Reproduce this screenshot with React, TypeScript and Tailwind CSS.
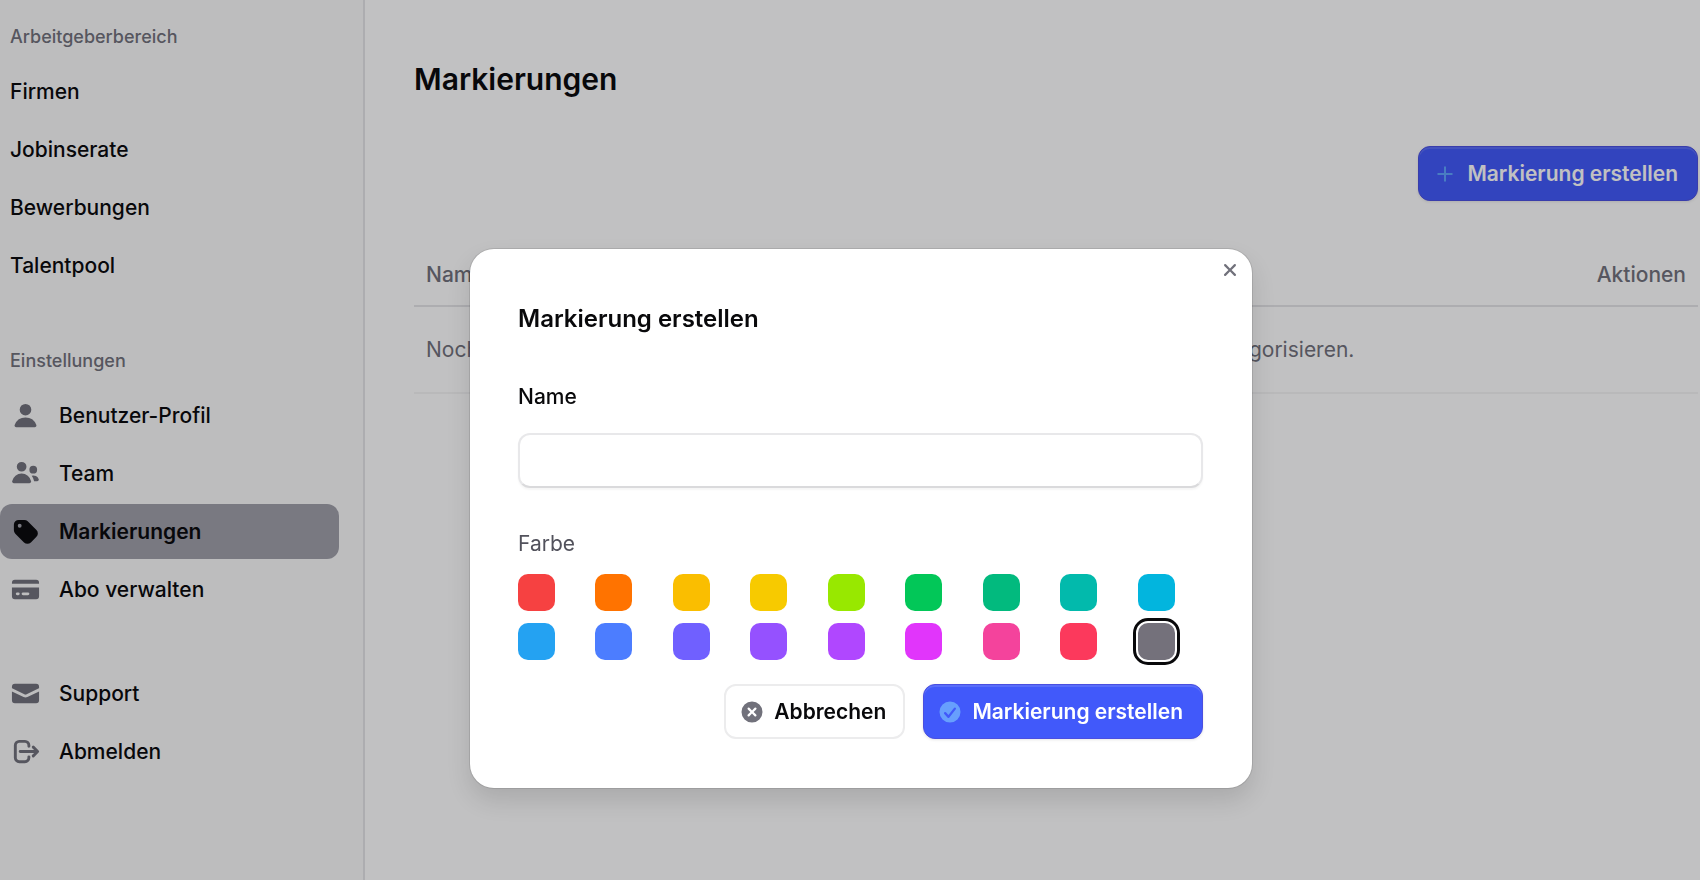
import React, { useState } from 'react';
import clsx from 'clsx';

const icons = {
  user: [
    'M8 8a3 3 0 1 0 0-6 3 3 0 0 0 0 6ZM12.735 14c.618 0 1.093-.561.872-1.139a6.002 6.002 0 0 0-11.215 0c-.22.578.254 1.139.872 1.139h9.47Z',
  ],
  users: [
    'M8.5 4.5a2.5 2.5 0 1 1-5 0 2.5 2.5 0 0 1 5 0ZM10.9 12.006c.11.542-.348.994-.9.994H2c-.553 0-1.01-.452-.902-.994a5.002 5.002 0 0 1 9.803 0ZM14.002 12h-1.59a2.556 2.556 0 0 0-.04-.29 6.476 6.476 0 0 0-1.167-2.603 3.002 3.002 0 0 1 3.633 1.911c.18.522-.283.982-.836.982ZM12 8a2 2 0 1 0 0-4 2 2 0 0 0 0 4Z',
  ],
  tag: [
    'M4.5 2A2.5 2.5 0 0 0 2 4.5v2.879a2.5 2.5 0 0 0 .732 1.767l4.5 4.5a2.5 2.5 0 0 0 3.536 0l2.878-2.878a2.5 2.5 0 0 0 0-3.536l-4.5-4.5A2.5 2.5 0 0 0 7.38 2H4.5ZM5 6a1 1 0 1 0 0-2 1 1 0 0 0 0 2Z',
  ],
  card: [
    'M2.5 3A1.5 1.5 0 0 0 1 4.5V5h14v-.5A1.5 1.5 0 0 0 13.5 3h-11Z',
    'M15 7H1v4.5A1.5 1.5 0 0 0 2.5 13h11a1.5 1.5 0 0 0 1.5-1.5V7ZM3 10.25a.75.75 0 0 1 .75-.75h.5a.75.75 0 0 1 0 1.5h-.5a.75.75 0 0 1-.75-.75Zm3.75-.75a.75.75 0 0 0 0 1.5h2.5a.75.75 0 0 0 0-1.5h-2.5Z',
  ],
  envelope: [
    'M2.5 3A1.5 1.5 0 0 0 1 4.5v.793c.026.009.051.02.076.032L7.674 8.51c.206.1.446.1.652 0l6.598-3.185A.755.755 0 0 1 15 5.293V4.5A1.5 1.5 0 0 0 13.5 3h-11Z',
    'M15 6.954 8.978 9.86a2.25 2.25 0 0 1-1.956 0L1 6.954V11.5A1.5 1.5 0 0 0 2.5 13h11a1.5 1.5 0 0 0 1.5-1.5V6.954Z',
  ],
  logout: [
    'M2 4.75A2.75 2.75 0 0 1 4.75 2h3a2.75 2.75 0 0 1 2.75 2.75v.5a.75.75 0 0 1-1.5 0v-.5c0-.69-.56-1.25-1.25-1.25h-3c-.69 0-1.25.56-1.25 1.25v6.5c0 .69.56 1.25 1.25 1.25h3c.69 0 1.25-.56 1.25-1.25v-.5a.75.75 0 0 1 1.5 0v.5A2.75 2.75 0 0 1 7.75 14h-3A2.75 2.75 0 0 1 2 11.25v-6.5Zm9.47.47a.75.75 0 0 1 1.06 0l2.25 2.25a.75.75 0 0 1 0 1.06l-2.25 2.25a.75.75 0 1 1-1.06-1.06l.97-.97H5.25a.75.75 0 0 1 0-1.5h7.19l-.97-.97a.75.75 0 0 1 0-1.06Z',
  ],
  xCircle: [
    'M8 15A7 7 0 1 0 8 1a7 7 0 0 0 0 14Zm2.78-4.22a.75.75 0 0 1-1.06 0L8 9.06l-1.72 1.72a.75.75 0 1 1-1.06-1.06L6.94 8 5.22 6.28a.75.75 0 0 1 1.06-1.06L8 6.94l1.72-1.72a.75.75 0 1 1 1.06 1.06L9.06 8l1.72 1.72a.75.75 0 0 1 0 1.06Z',
  ],
  checkCircle: [
    'M8 15A7 7 0 1 0 8 1a7 7 0 0 0 0 14Zm3.844-8.791a.75.75 0 0 0-1.188-.918l-3.7 4.79-1.649-1.833a.75.75 0 1 0-1.114 1.004l2.25 2.5a.75.75 0 0 0 1.15-.043l4.25-5.5Z',
  ],
  xMark: [
    'M5.28 4.22a.75.75 0 0 0-1.06 1.06L6.94 8l-2.72 2.72a.75.75 0 1 0 1.06 1.06L8 9.06l2.72 2.72a.75.75 0 1 0 1.06-1.06L9.06 8l2.72-2.72a.75.75 0 0 0-1.06-1.06L8 6.94 5.28 4.22Z',
  ],
};

type IconName = keyof typeof icons;

function Icon({ name, className }: { name: IconName; className: string }) {
  return (
    <svg viewBox="0 0 16 16" fill="currentColor" aria-hidden="true" className={clsx('shrink-0', className)}>
      {icons[name].map((d) => (
        <path key={d} d={d} fillRule="evenodd" clipRule="evenodd" />
      ))}
    </svg>
  );
}

interface NavItem {
  label: string;
  icon?: IconName;
  active?: boolean;
}

const sections: { title?: string; items: NavItem[] }[] = [
  {
    title: 'Arbeitgeberbereich',
    items: [{ label: 'Firmen' }, { label: 'Jobinserate' }, { label: 'Bewerbungen' }, { label: 'Talentpool' }],
  },
  {
    title: 'Einstellungen',
    items: [
      { label: 'Benutzer-Profil', icon: 'user' },
      { label: 'Team', icon: 'users' },
      { label: 'Markierungen', icon: 'tag', active: true },
      { label: 'Abo verwalten', icon: 'card' },
    ],
  },
  {
    items: [
      { label: 'Support', icon: 'envelope' },
      { label: 'Abmelden', icon: 'logout' },
    ],
  },
];

const colors = [
  { name: 'red', className: 'bg-[#f64141]' },
  { name: 'orange', className: 'bg-[#ff7300]' },
  { name: 'amber', className: 'bg-[#fabe00]' },
  { name: 'yellow', className: 'bg-[#f7ca00]' },
  { name: 'lime', className: 'bg-[#98e800]' },
  { name: 'green', className: 'bg-[#02c758]' },
  { name: 'emerald', className: 'bg-[#02ba7e]' },
  { name: 'teal', className: 'bg-[#02baac]' },
  { name: 'cyan', className: 'bg-[#02b5de]' },
  { name: 'sky', className: 'bg-[#24a2f2]' },
  { name: 'blue', className: 'bg-[#4c7dff]' },
  { name: 'indigo', className: 'bg-[#7060ff]' },
  { name: 'violet', className: 'bg-[#9551ff]' },
  { name: 'purple', className: 'bg-[#b047ff]' },
  { name: 'fuchsia', className: 'bg-[#e135fb]' },
  { name: 'pink', className: 'bg-[#f4439c]' },
  { name: 'rose', className: 'bg-[#fc395c]' },
  { name: 'zinc', className: 'bg-[#74717b]' },
];

const primaryButton =
  'flex h-[55px] items-center gap-2.5 rounded-xl border border-[#4a4fe0] bg-[#4159fa] pr-[19px] pl-3.5 font-semibold text-white shadow-[inset_0_2px_0_rgba(255,255,255,0.12),0_1px_3px_rgba(0,0,0,0.1)]';

function Sidebar() {
  return (
    <nav className="flex w-[365px] shrink-0 flex-col gap-[49px] border-r-2 border-zinc-200 bg-zinc-50 pt-[18px] pr-6">
      {sections.map((section, i) => (
        <div key={i}>
          {section.title && (
            <h3 className="mb-2 px-2.5 text-[18px] leading-[38px] font-medium text-zinc-500">{section.title}</h3>
          )}
          <ul className="flex flex-col gap-[3px]">
            {section.items.map((item) => (
              <li key={item.label}>
                <a
                  href="#"
                  className={clsx(
                    'flex h-[55px] items-center gap-[18px] rounded-xl px-2.5 text-zinc-950',
                    item.active ? 'bg-zinc-400 font-semibold' : 'font-medium',
                  )}
                >
                  {item.icon && (
                    <Icon name={item.icon} className={clsx('size-[31px]', item.active ? 'text-zinc-950' : 'text-zinc-500')} />
                  )}
                  {item.label}
                </a>
              </li>
            ))}
          </ul>
        </div>
      ))}
    </nav>
  );
}

function CreateDialog({ onClose }: { onClose: () => void }) {
  const [name, setName] = useState('');
  const [color, setColor] = useState('zinc');

  return (
    <div className="fixed inset-0 flex items-start justify-center bg-zinc-950/25 pt-[249px] pl-[22px]">
      <form
        role="dialog"
        aria-labelledby="dialog-title"
        onSubmit={(e) => e.preventDefault()}
        className="relative w-full max-w-[782px] rounded-3xl bg-white py-[49px] pr-[49px] pl-12 shadow-[0_0_0_1px_rgba(9,9,11,0.1),0_12px_24px_rgba(0,0,0,0.12)]"
      >
        <button type="button" aria-label="Schließen" onClick={onClose} className="absolute top-[9px] right-2.5 text-zinc-500">
          <Icon name="xMark" className="size-6" />
        </button>

        <h2 id="dialog-title" className="text-[24px] leading-[42px] font-semibold text-zinc-950">
          Markierung erstellen
        </h2>

        <label htmlFor="name" className="mt-[37px] block leading-10 font-medium text-zinc-950">
          Name
        </label>
        <input
          id="name"
          type="text"
          value={name}
          onChange={(e) => setName(e.target.value)}
          className="mt-4 block h-[55px] w-full rounded-xl border-2 border-[#e8e8ea] border-b-[#dadadc] bg-white px-4 text-zinc-950 shadow-[0_2px_2px_rgba(0,0,0,0.04)] outline-none"
        />

        <fieldset className="mt-9">
          <legend className="leading-10 text-zinc-600">Farbe</legend>
          <div className="mt-2.5 grid grid-cols-9 gap-3">
            {colors.map((c) => (
              <input
                key={c.name}
                type="radio"
                name="color"
                aria-label={c.name}
                checked={color === c.name}
                onChange={() => setColor(c.name)}
                className={clsx(
                  'size-[37px] appearance-none rounded-[10px] outline-offset-2 outline-zinc-950 checked:outline-3',
                  c.className,
                )}
              />
            ))}
          </div>
        </fieldset>

        <div className="mt-6 flex justify-end gap-[18px]">
          <button
            type="button"
            onClick={onClose}
            className="flex h-[55px] items-center gap-2.5 rounded-xl border-2 border-[#ececed] pr-[17px] pl-3.5 font-semibold text-zinc-950"
          >
            <Icon name="xCircle" className="size-6 text-zinc-500" />
            Abbrechen
          </button>
          <button type="submit" className={primaryButton}>
            <Icon name="checkCircle" className="size-6 text-[#679ffd]" />
            Markierung erstellen
          </button>
        </div>
      </form>
    </div>
  );
}

export default function App() {
  const [open, setOpen] = useState(true);

  return (
    <div className="flex min-h-screen bg-white font-[Inter,sans-serif] text-[21px] text-zinc-950">
      <Sidebar />

      <main className="min-w-0 flex-1 pt-[58px] pr-0.5 pl-[49px]">
        <h1 className="text-[30px] leading-[42px] font-semibold">Markierungen</h1>

        <div className="mt-[46px] flex justify-end">
          <button type="button" onClick={() => setOpen(true)} className={primaryButton}>
            <svg viewBox="0 0 24 24" fill="none" stroke="#5fa5ff" strokeWidth="2" aria-hidden="true" className="size-6">
              <path d="M12 4.5v15M4.5 12h15" />
            </svg>
            Markierung erstellen
          </button>
        </div>

        <table className="mt-[43px] w-full text-left text-zinc-500">
          <thead>
            <tr className="h-[62px] border-b-2 border-zinc-200">
              <th className="px-3 font-medium">Name</th>
              <th className="px-3 text-right font-medium">Aktionen</th>
            </tr>
          </thead>
          <tbody>
            <tr className="h-[87px] border-b-2 border-zinc-100">
              <td colSpan={2} className="px-3">
                Noch keine Markierungen erstellt. Erstelle Markierungen, um Bewerbungen zu kategorisieren.
              </td>
            </tr>
          </tbody>
        </table>
      </main>

      {open && <CreateDialog onClose={() => setOpen(false)} />}
    </div>
  );
}
